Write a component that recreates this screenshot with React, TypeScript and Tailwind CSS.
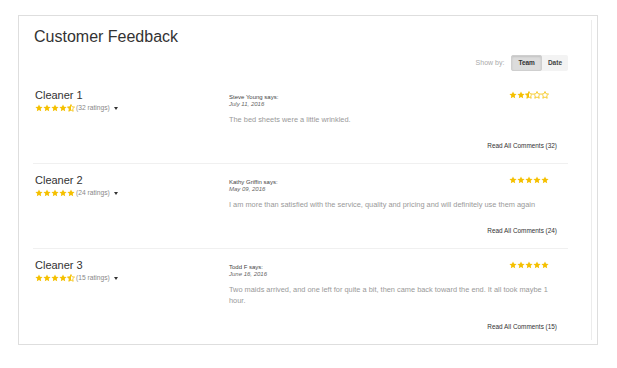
import { useId } from "react";

type Feedback = {
  name: string;
  rating: number;
  count: number;
  author: string;
  date: string;
  comment: string;
  stars: number;
};

const feedback: Feedback[] = [
  {
    name: "Cleaner 1",
    rating: 4.5,
    count: 32,
    author: "Steve Young",
    date: "July 11, 2016",
    comment: "The bed sheets were a little wrinkled.",
    stars: 2.5,
  },
  {
    name: "Cleaner 2",
    rating: 5,
    count: 24,
    author: "Kathy Griffin",
    date: "May 09, 2016",
    comment: "I am more than satisfied with the service, quality and pricing and will definitely use them again",
    stars: 5,
  },
  {
    name: "Cleaner 3",
    rating: 4.5,
    count: 15,
    author: "Todd F",
    date: "June 16, 2016",
    comment: "Two maids arrived, and one left for quite a bit, then came back toward the end. It all took maybe 1 hour.",
    stars: 5,
  },
];

const STAR = "12,1.5 15.2,8.4 22.7,9.2 17.1,14.3 18.6,21.8 12,18 5.4,21.8 6.9,14.3 1.3,9.2 8.8,8.4";

function Star({ kind }: { kind: "full" | "half" | "empty" }) {
  const id = useId();
  return (
    <svg width="8" height="8" viewBox="0 0 24 24" className="block">
      {kind === "full" && <polygon points={STAR} fill="#f5c000" />}
      {kind !== "full" && (
        <polygon points={STAR} fill="none" stroke="#f5c000" strokeWidth="2.4" strokeLinejoin="round" />
      )}
      {kind === "half" && (
        <>
          <clipPath id={id}>
            <rect x="0" y="0" width="12" height="24" />
          </clipPath>
          <polygon points={STAR} fill="#f5c000" clipPath={`url(#${id})`} />
        </>
      )}
    </svg>
  );
}

function Stars({ value }: { value: number }) {
  return (
    <div className="flex items-center">
      {[1, 2, 3, 4, 5].map((i) => (
        <Star key={i} kind={value >= i ? "full" : value >= i - 0.5 ? "half" : "empty"} />
      ))}
    </div>
  );
}

function Row({ item, last }: { item: Feedback; last: boolean }) {
  return (
    <div className={`flex pb-[13px] ${last ? "" : "border-b border-[#f0f0f0]"}`}>
      <div className="w-[196px] pl-[2px] pt-[9px]">
        <p className="text-[11px] leading-[14px] text-[#333]">{item.name}</p>
        <div className="mt-[1px] flex items-center">
          <Stars value={item.rating} />
          <span className="ml-[1px] text-[6.7px] leading-[9px] text-[#888]">({item.count} ratings)</span>
          <span className="ml-[4px] mt-[1px] h-0 w-0 border-x-[2.5px] border-t-[3px] border-x-transparent border-t-[#333]" />
        </div>
      </div>
      <div className="flex flex-1 flex-col pr-[11px] pt-[15px]">
        <div className="flex items-start justify-between pr-[8px]">
          <div>
            <p className="text-[6px] leading-[6.5px] text-[#444]">{item.author} says:</p>
            <p className="text-[6px] italic leading-[6.5px] text-[#666]">{item.date}</p>
          </div>
          <div className="-mt-[3px]">
            <Stars value={item.stars} />
          </div>
        </div>
        <p className="mt-[7px] text-[7.4px] leading-[11px] text-[#999]">{item.comment}</p>
        <div className="mt-[17px] text-right text-[6.4px] leading-[8px] text-[#333]">
          Read All Comments ({item.count})
        </div>
      </div>
    </div>
  );
}

export default function App() {
  return (
    <div className="h-[368px] w-[617px] bg-white pl-[18px] pt-[15px]" style={{ fontFamily: '"Liberation Sans", Arial, sans-serif' }}>
      <div className="flex h-[330px] w-[580px] border border-[#dedede] py-[4px] pr-[5px]">
        <div className="flex-1 border-r border-[#ececec] pl-[14px] pr-[23px]">
          <h1 className="mt-[7px] pl-[1px] text-[16px] leading-[20px] text-[#333]">Customer Feedback</h1>
          <div className="mt-[8px] flex items-center justify-end">
            <span className="mr-[7px] text-[7px] text-[#aaa]">Show by:</span>
            <div className="flex h-[16px] rounded-[2px] bg-[#f3f3f3]">
              <button className="rounded-[2px] border border-[#cfcfcf] bg-[#dcdcdc] px-[6px] text-[6.5px] font-bold text-[#333] shadow-[inset_0_1px_2px_rgba(0,0,0,0.12)]">
                Team
              </button>
              <button className="px-[6px] text-[6.5px] font-bold text-[#444]">Date</button>
            </div>
          </div>
          <div className="mt-[8px]">
            {feedback.map((f, i) => (
              <Row key={f.name} item={f} last={i === feedback.length - 1} />
            ))}
          </div>
        </div>
      </div>
    </div>
  );
}
